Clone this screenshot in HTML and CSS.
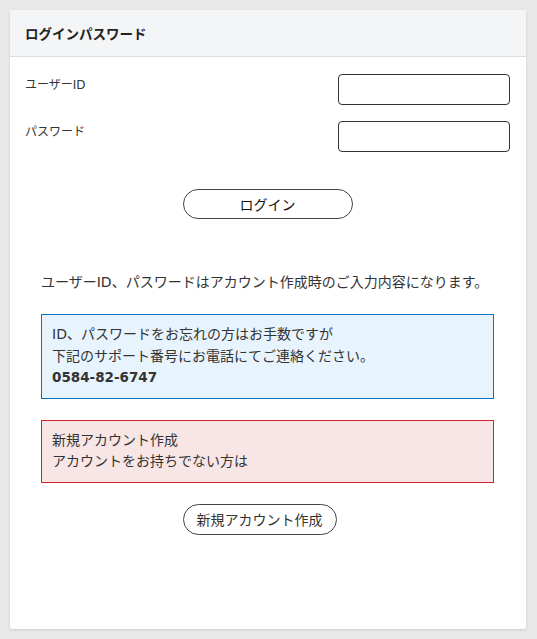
FILE: index.html
```html
<!DOCTYPE html>
<html lang="ja">
<head>
<meta charset="utf-8">
<title>ログインパスワード</title>
<link rel="stylesheet" href="styles.css">
</head>
<body>
<div class="card">
  <div class="card-header">ログインパスワード</div>
  <div class="card-body">
    <div class="form-row">
      <label class="form-label">ユーザーID</label>
      <input class="form-input" type="text">
    </div>
    <div class="form-row">
      <label class="form-label">パスワード</label>
      <input class="form-input" type="password">
    </div>
    <div class="btn-wrap">
      <button class="btn btn-login">ログイン</button>
    </div>
    <div class="notes">
      <p class="note-text">ユーザーID、パスワードはアカウント作成時のご入力内容になります。</p>
      <div class="box box-info">
        ID、パスワードをお忘れの方はお手数ですが<br>
        下記のサポート番号にお電話にてご連絡ください。<br>
        <strong class="tel">0584-82-6747</strong>
      </div>
      <div class="box box-alert">
        新規アカウント作成<br>
        アカウントをお持ちでない方は
      </div>
      <div class="btn-wrap btn-wrap-new">
        <button class="btn btn-new">新規アカウント作成</button>
      </div>
    </div>
  </div>
</div>
</body>
</html>
```

FILE: styles.css
```css
html, body {
  margin: 0;
  padding: 0;
}
body {
  background: #e9e9e9;
  padding: 10px;
  font-family: "DejaVu Sans", "Noto Sans CJK JP", sans-serif;
  color: #333;
  font-size: 14px;
}
.card {
  width: 516px;
  height: 619px;
  box-sizing: border-box;
  background: #fff;
  border-radius: 2px;
  box-shadow: 0 1px 3px rgba(0,0,0,0.12);
  overflow: hidden;
}
.card-header {
  height: 46px;
  background: #f4f5f7;
  border-bottom: 1px solid #dcdcdc;
  display: flex;
  align-items: center;
  padding: 0 15px;
  font-weight: bold;
  font-size: 13.5px;
  color: #222;
}
.card-body {
  padding: 17px 16px 0 15px;
}
.form-row {
  display: flex;
  justify-content: space-between;
  align-items: flex-start;
  margin-bottom: 16px;
}
.form-label {
  font-size: 12px;
  line-height: 20px;
  padding-top: 1px;
  color: #333;
}
.form-input {
  width: 172px;
  height: 31px;
  box-sizing: border-box;
  border: 1px solid #333;
  border-radius: 4px;
  background: #fff;
  margin: 0;
}
.btn-wrap {
  display: flex;
  justify-content: center;
  margin-top: 37px;
}
.btn {
  font-family: inherit;
  font-weight: normal;
  background: #fff;
  border: 1px solid #444;
  cursor: pointer;
  padding: 0;
  margin: 0;
}
.btn-login {
  width: 170px;
  height: 30px;
  border-radius: 15px;
  font-size: 14px;
  color: #111;
}
.notes {
  margin: 52px 16px 0 16px;
}
.note-text {
  margin: 0;
  line-height: 22px;
}
.box {
  margin-top: 21px;
  padding: 9px 10px;
  line-height: 21.5px;
}
.box-info {
  background: #e8f4fd;
  border: 1px solid #0a72be;
}
.box-alert {
  margin-top: 21px;
  background: #f8e6e6;
  border: 1px solid #d0242c;
}
.tel {
  font-weight: bold;
  font-size: 13.5px;
}
.btn-wrap-new {
  margin-top: 21px;
  padding-right: 16px;
}
.btn-new {
  width: 154px;
  height: 31px;
  border-radius: 16px;
  font-size: 14px;
  color: #333;
}
```
